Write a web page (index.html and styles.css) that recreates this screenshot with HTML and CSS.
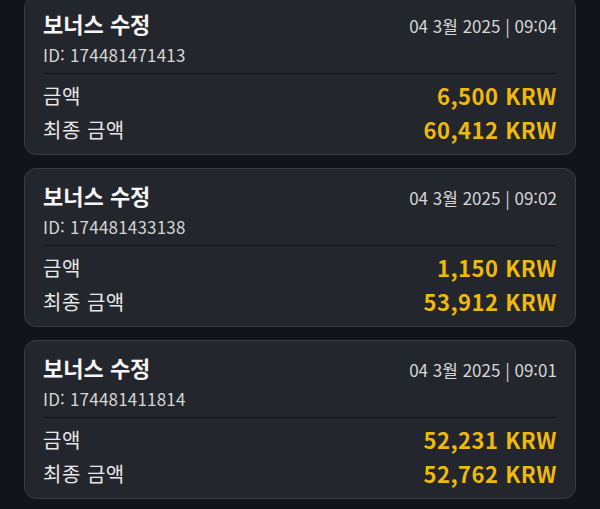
FILE: index.html
```html
<!DOCTYPE html>
<html lang="ko">
<head>
  <meta charset="utf-8">
  <title>보너스 내역</title>
  <link rel="stylesheet" href="styles.css">
</head>
<body>

  <div class="list">

    <div class="card">
      <div class="card-head">
        <div class="head-row">
          <div class="title">보너스 수정</div>
          <div class="date">04 3월 2025 | 09:04</div>
        </div>
        <div class="tx-id">ID: 174481471413</div>
      </div>
      <div class="card-body">
        <div class="row"><span class="label">금액</span><span class="amount">6,500 KRW</span></div>
        <div class="row"><span class="label">최종 금액</span><span class="amount">60,412 KRW</span></div>
      </div>
    </div>

    <div class="card">
      <div class="card-head">
        <div class="head-row">
          <div class="title">보너스 수정</div>
          <div class="date">04 3월 2025 | 09:02</div>
        </div>
        <div class="tx-id">ID: 174481433138</div>
      </div>
      <div class="card-body">
        <div class="row"><span class="label">금액</span><span class="amount">1,150 KRW</span></div>
        <div class="row"><span class="label">최종 금액</span><span class="amount">53,912 KRW</span></div>
      </div>
    </div>

    <div class="card">
      <div class="card-head">
        <div class="head-row">
          <div class="title">보너스 수정</div>
          <div class="date">04 3월 2025 | 09:01</div>
        </div>
        <div class="tx-id">ID: 174481411814</div>
      </div>
      <div class="card-body">
        <div class="row"><span class="label">금액</span><span class="amount">52,231 KRW</span></div>
        <div class="row"><span class="label">최종 금액</span><span class="amount">52,762 KRW</span></div>
      </div>
    </div>

  </div>

</body>
</html>
```

FILE: styles.css
```css
html, body {
    margin: 0;
    background: #11141a;
}

body {
    padding: 0 24px;
    font-family: "Noto Sans CJK KR", "Noto Sans", sans-serif;
    color: #e8e8e8;
}

.list {
    display: flex;
    flex-direction: column;
    gap: 13px;
    margin-top: -4px;
}

.card {
    background: #23262d;
    border: 1px solid #3a3d44;
    border-radius: 12px;
    padding: 0 18px;
}

.card-head {
    padding-top: 11px;
    padding-bottom: 5px;
    border-bottom: 1px solid #111318;
}

.head-row {
    display: flex;
    justify-content: space-between;
    align-items: baseline;
    height: 30px;
}

.title {
    font-size: 22px;
    font-weight: 700;
    line-height: 30px;
    color: #f5f5f5;
}

.date {
    font-size: 17px;
    line-height: 30px;
    color: #d6d6d6;
}

.tx-id {
    margin-top: 4px;
    font-size: 17px;
    letter-spacing: 0.2px;
    line-height: 26px;
    color: #d6d6d6;
}

.card-body {
    padding: 4px 0 8px;
}

.row {
    display: flex;
    justify-content: space-between;
    align-items: center;
    height: 34px;
}

.label {
    font-size: 20px;
    letter-spacing: 0.5px;
    color: #e8e8e8;
}

.amount {
    font-size: 22px;
    font-weight: 700;
    letter-spacing: 0.5px;
    color: #f0b90b;
}
```
